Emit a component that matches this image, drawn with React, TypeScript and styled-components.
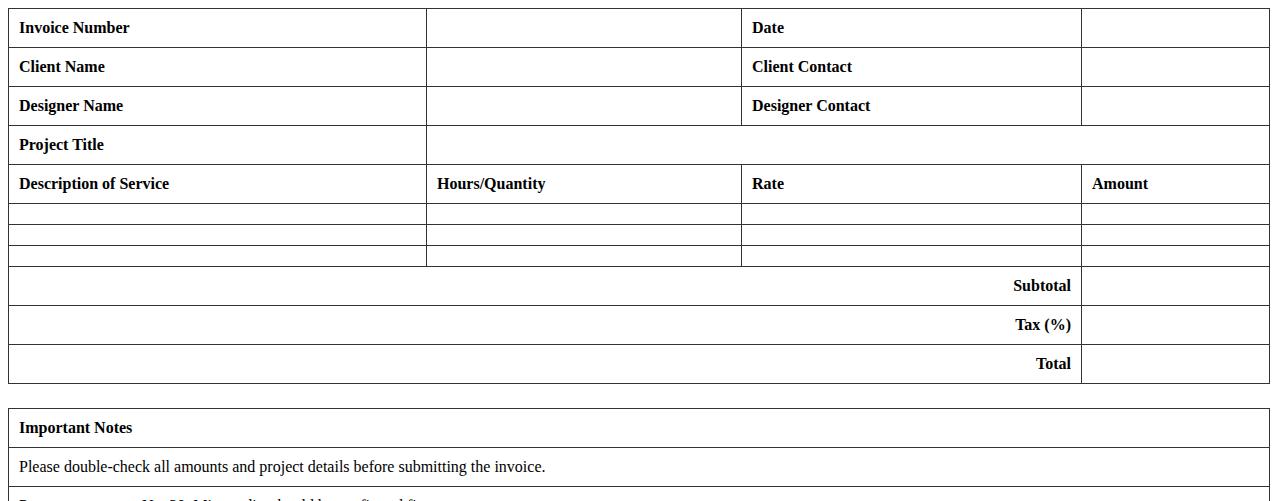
import styled, { createGlobalStyle } from "styled-components";

const GlobalStyle = createGlobalStyle`
  body {
    margin: 8px;
    background: #ffffff;
    font-family: "Liberation Serif", "Times New Roman", serif;
    font-size: 16px;
    color: #000000;
  }
`;

const Sheet = styled.table`
  width: 100%;
  border-collapse: collapse;
  table-layout: fixed;
  margin-bottom: 24px;
`;

const Cell = styled.td<{ $head?: boolean; $right?: boolean }>`
  border: 1px solid #333333;
  padding: 10px;
  line-height: 18px;
  font-weight: ${(props) => (props.$head ? "bold" : "normal")};
  text-align: ${(props) => (props.$right ? "right" : "left")};
  vertical-align: middle;
`;

const detailRows = [
  ["Invoice Number", "Date"],
  ["Client Name", "Client Contact"],
  ["Designer Name", "Designer Contact"],
];

const totals = ["Subtotal", "Tax (%)", "Total"];

const notes = [
  "Please double-check all amounts and project details before submitting the invoice.",
  "Payment terms are Net 30. Minor edits should be confirmed first.",
];

const App = () => {
  return (
    <>
      <GlobalStyle />
      <Sheet>
        <colgroup>
          <col style={{ width: 418 }} />
          <col style={{ width: 315 }} />
          <col style={{ width: 340 }} />
          <col />
        </colgroup>
        <tbody>
          {detailRows.map(([left, right]) => (
            <tr key={left}>
              <Cell $head>{left}</Cell>
              <Cell></Cell>
              <Cell $head>{right}</Cell>
              <Cell></Cell>
            </tr>
          ))}
          <tr>
            <Cell $head>Project Title</Cell>
            <Cell colSpan={3}></Cell>
          </tr>
          <tr>
            <Cell $head>Description of Service</Cell>
            <Cell $head>Hours/Quantity</Cell>
            <Cell $head>Rate</Cell>
            <Cell $head>Amount</Cell>
          </tr>
          {[0, 1, 2].map((i) => (
            <tr key={i}>
              <Cell></Cell>
              <Cell></Cell>
              <Cell></Cell>
              <Cell></Cell>
            </tr>
          ))}
          {totals.map((label) => (
            <tr key={label}>
              <Cell $head $right colSpan={3}>
                {label}
              </Cell>
              <Cell></Cell>
            </tr>
          ))}
        </tbody>
      </Sheet>
      <Sheet>
        <tbody>
          <tr>
            <Cell $head>Important Notes</Cell>
          </tr>
          {notes.map((note) => (
            <tr key={note}>
              <Cell>{note}</Cell>
            </tr>
          ))}
        </tbody>
      </Sheet>
    </>
  );
};

export default App;
